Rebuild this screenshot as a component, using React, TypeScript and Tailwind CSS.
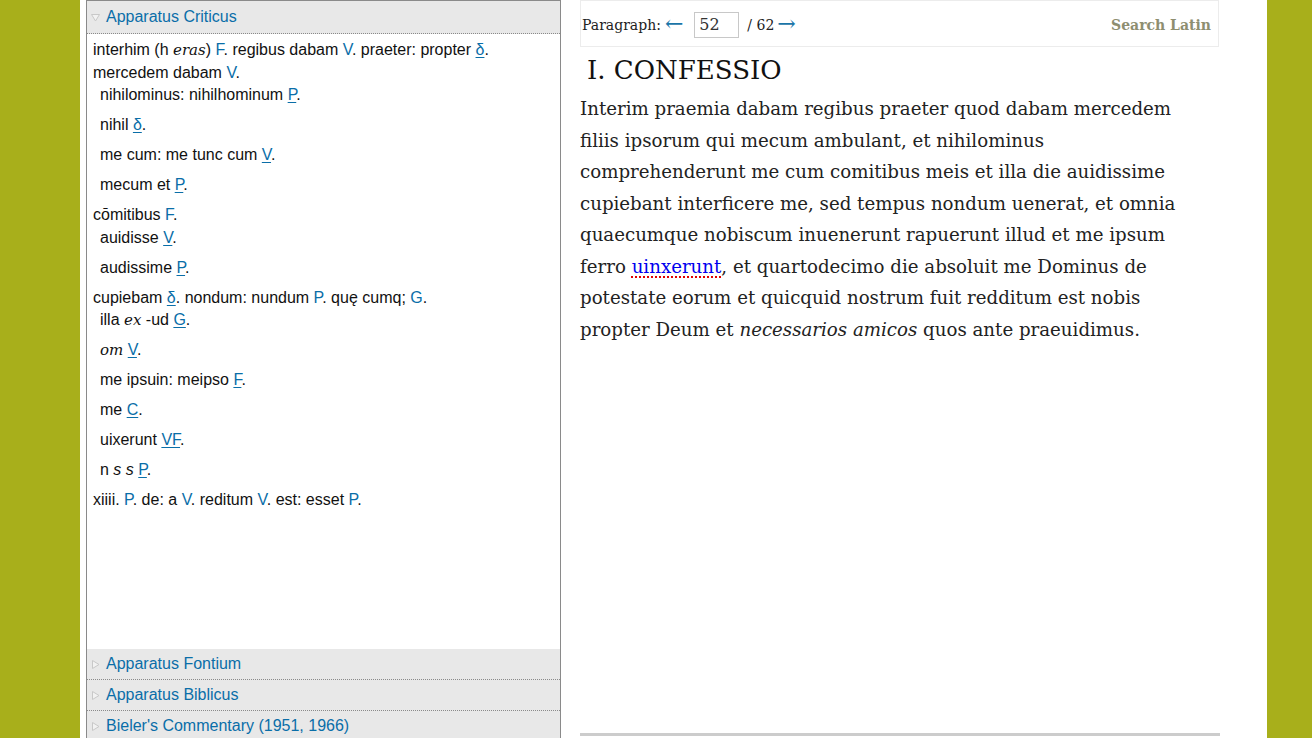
import React from "react";

const sans = { fontFamily: '"Liberation Sans", Arial, sans-serif' };
const serif = { fontFamily: '"DejaVu Serif", Georgia, serif' };

function Tri({ down }: { down?: boolean }) {
  return (
    <svg width="11" height="11" viewBox="0 0 11 11" className="shrink-0">
      {down ? (
        <path d="M1.5 2.5 L9.5 2.5 L5.5 9 Z" fill="#f2f2f2" stroke="#c8c8c8" strokeWidth="1" />
      ) : (
        <path d="M2.5 1.5 L9 5.5 L2.5 9.5 Z" fill="#f2f2f2" stroke="#c8c8c8" strokeWidth="1" />
      )}
    </svg>
  );
}

function L({ children, u }: { children: React.ReactNode; u?: boolean }) {
  return <span className={u ? "text-[#0a6ea8] underline underline-offset-2" : "text-[#0a6ea8]"}>{children}</span>;
}

function Main({ children }: { children: React.ReactNode }) {
  return <div className="leading-[22px] h-[22.5px] whitespace-nowrap">{children}</div>;
}

function Sub({ children }: { children: React.ReactNode }) {
  return <div className="leading-[22px] h-[22px] mb-[8px] pl-[7px] whitespace-nowrap">{children}</div>;
}

function SectionHead({ title, open }: { title: string; open?: boolean }) {
  return (
    <div
      className={
        "flex items-center gap-[5px] pl-[3px] bg-[#e8e8e8] text-[16px] text-[#0a6ea8] border-b border-dotted border-[#8a8a8a] shrink-0 " +
        (open ? "h-[33px]" : "h-[31px]")
      }
      style={sans}
    >
      <Tri down={open} />
      <span>{title}</span>
    </div>
  );
}

export default function App() {
  return (
    <div className="w-[1312px] h-[738px] bg-[#a8af1b] overflow-hidden">
      <div className="ml-[80px] w-[1187px] h-[738px] bg-white flex items-start">
        <div className="ml-[6px] w-[475px] h-[742px] flex flex-col border-x border-t border-[#8a8a8a]">
          <SectionHead title="Apparatus Criticus" open />
          <div className="flex-1 pt-[5px] pl-[6px] text-[16px] text-[#111]" style={sans}>
            <Main>
              interhim (h <i style={serif} className="text-[15px]">eras</i>) <L>F</L>. regibus dabam <L>V</L>. praeter: propter <L u>δ</L>.
            </Main>
            <Main>
              mercedem dabam <L>V</L>.
            </Main>
            <Sub>
              nihilominus: nihilhominum <L u>P</L>.
            </Sub>
            <Sub>
              nihil <L u>δ</L>.
            </Sub>
            <Sub>
              me cum: me tunc cum <L u>V</L>.
            </Sub>
            <Sub>
              mecum et <L u>P</L>.
            </Sub>
            <Main>
              cōmitibus <L>F</L>.
            </Main>
            <Sub>
              auidisse <L u>V</L>.
            </Sub>
            <Sub>
              audissime <L u>P</L>.
            </Sub>
            <Main>
              cupiebam <L u>δ</L>. nondum: nundum <L>P</L>. quę cumq; <L>G</L>.
            </Main>
            <Sub>
              illa <i style={serif} className="text-[15px]">ex</i> -ud <L u>G</L>.
            </Sub>
            <Sub>
              <i style={serif} className="text-[15px]">om</i> <L u>V</L>.
            </Sub>
            <Sub>
              me ipsuin: meipso <L u>F</L>.
            </Sub>
            <Sub>
              me <L u>C</L>.
            </Sub>
            <Sub>
              uixerunt <L u>VF</L>.
            </Sub>
            <Sub>
              n <i>s s</i> <L u>P</L>.
            </Sub>
            <Main>
              xiiii. <L>P</L>. de: a <L>V</L>. reditum <L>V</L>. est: esset <L>P</L>.
            </Main>
          </div>
          <SectionHead title="Apparatus Fontium" />
          <SectionHead title="Apparatus Biblicus" />
          <SectionHead title="Bieler's Commentary (1951, 1966)" />
        </div>

        <div className="ml-[19px] w-[640px] h-[736px] border-b-[3px] border-[#cccccc] flex flex-col">
          <div
            className="w-[639px] h-[47px] border border-[#ececec] flex items-center justify-between pl-[1px] pr-[7px] pt-[3px] text-[14px] text-[#222]"
            style={serif}
          >
            <div className="flex items-center">
              <span>Paragraph:</span>
              <span className="text-[#1a75a8] ml-[4px] text-[22px] leading-none -mt-[3px]">←</span>
              <div className="ml-[11px] w-[45px] h-[26px] border border-[#c8c8c8] flex items-center pl-[4px] text-[16px] text-[#333]">
                52
              </div>
              <span className="ml-[8px]">/ 62</span>
              <span className="text-[#1a75a8] ml-[3px] text-[22px] leading-none -mt-[3px]">→</span>
            </div>
            <span className="font-bold text-[#8e8e70] text-[14px]">Search Latin</span>
          </div>
          <h1 className="mt-[7px] ml-[7px] text-[26px] leading-[32px] text-[#111]" style={serif}>
            I. CONFESSIO
          </h1>
          <p className="mt-[7px] text-[18.2px] leading-[31.5px] text-[#222] whitespace-nowrap" style={serif}>
            Interim praemia dabam regibus praeter quod dabam mercedem
            <br />
            filiis ipsorum qui mecum ambulant, et nihilominus
            <br />
            comprehenderunt me cum comitibus meis et illa die auidissime
            <br />
            cupiebant interficere me, sed tempus nondum uenerat, et omnia
            <br />
            quaecumque nobiscum inuenerunt rapuerunt illud et me ipsum
            <br />
            ferro{" "}
            <span className="text-[#0000ee] underline decoration-dotted decoration-[#e00000] decoration-2 underline-offset-4">
              uinxerunt
            </span>
            , et quartodecimo die absoluit me Dominus de
            <br />
            potestate eorum et quicquid nostrum fuit redditum est nobis
            <br />
            propter Deum et <i>necessarios amicos</i> quos ante praeuidimus.
          </p>
        </div>
      </div>
    </div>
  );
}
